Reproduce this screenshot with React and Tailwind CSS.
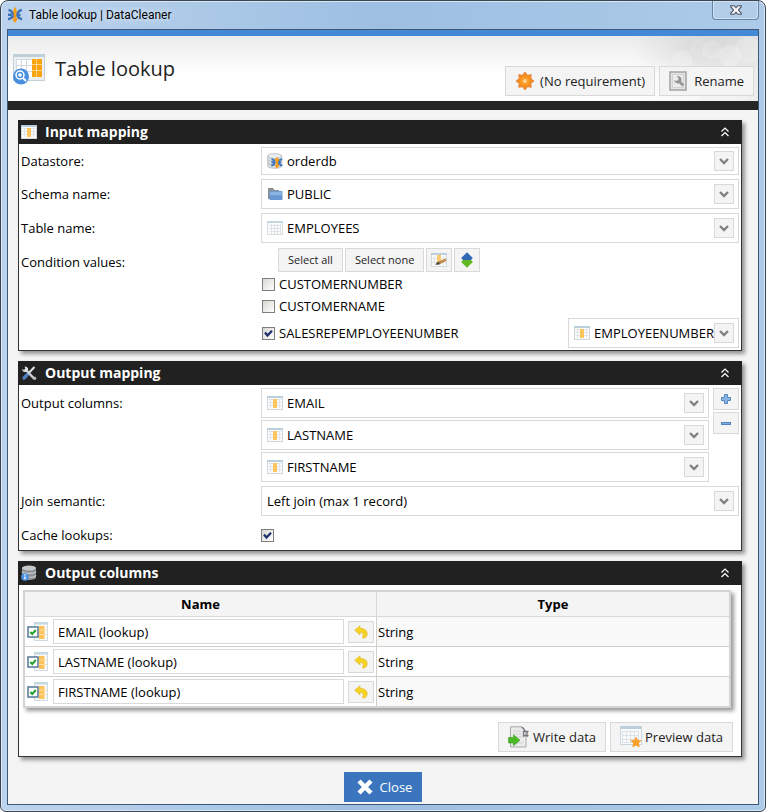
import React from "react";

function ColumnIcon() {
  return (
    <svg width="16" height="14" viewBox="0 0 16 14" className="shrink-0" aria-hidden="true">
      <rect x="0.5" y="0.5" width="15" height="13" fill="#fafbfb" stroke="#d0d8dd" />
      <rect x="0" y="0" width="16" height="2" fill="#b9cfdc" />
      <path d="M3.5 3v9M12.5 3v9M1.5 3.5h13M1.5 6.500h13M1.5 9.5h13" stroke="#e0e4e6" strokeWidth="1" fill="none" />
      <rect x="6" y="3" width="4" height="9" fill="#fdc65c" />
    </svg>
  );
}

function GridIcon() {
  return (
    <svg width="16" height="14" viewBox="0 0 16 14" className="shrink-0" aria-hidden="true">
      <rect x="0.5" y="0.5" width="15" height="13" fill="#fbfcfc" stroke="#d5dde2" />
      <rect x="0" y="0" width="16" height="2" fill="#c6d7e1" />
      <path d="M4.5 3v10M7.5 3v10M10.5 3v10M13.500 3v10M2 4.5h12M2 7.5h12M2 10.5h12" stroke="#dfe3e6" fill="none" />
    </svg>
  );
}

function FolderIcon() {
  return (
    <svg width="16" height="14" viewBox="0 0 16 14" className="shrink-0" aria-hidden="true">
      <path d="M1 12V1.500Q1 1 1.500 1H6l1.500 2H12v9z" fill="#8c8f93" />
      <path d="M2.500 5Q2.500 4 3.300 4H14.700q.8 0 .8.800V12.200q0 .8-.8.800H3.200q-.7 0-.7-.8z" fill="#6697d2" />
      <path d="M3.200 4.800h11.600v3.500H3.200z" fill="#8bb3e1" />
    </svg>
  );
}

function CleanerGlyph({ size }) {
  return (
    <svg width={size} height={size} viewBox="0 0 16 16" className="shrink-0" aria-hidden="true">
      <path d="M1.500 3c2 .2 3.500 1.500 4.500 3.500h1v3H5.500C4.500 11 3 12 1 12.300M1 7.800h4" fill="none" stroke="#3b74b8" strokeWidth="2.400" />
      <path d="M14.800 3c-2 .2-3.300 1.500-4.300 3.200-.6 1.200-.4 2.500.3 3.500.9 1.500 2.200 2.300 4.200 2.600M11 8h2.500" fill="none" stroke="#3b74b8" strokeWidth="2.400" />
      <path d="M8 0l1.300 1.500L8.800 3l1.900 1.300L9.300 5.800v5.700h1.900L8 16l-3.200-4.500h1.900V5.800L5.300 4.300 7.200 3l-.5-1.500z" fill="#f79a1b" />
    </svg>
  );
}

function DatastoreIcon() {
  return (
    <svg width="16" height="16" viewBox="0 0 16 16" className="shrink-0" aria-hidden="true">
      <path d="M.700 3v10c0 3 14 3 14 0V3z" fill="#dcdfe3" stroke="#a9aeb4" strokeWidth=".7" />
      <path d="M.700 6.500c1 1.500 3 2 5 2M.700 10c1 1.500 3 2 5 2" stroke="#b8bcc2" fill="none" />
      <ellipse cx="7.700" cy="3" rx="7" ry="2.300" fill="#eceef1" stroke="#a9aeb4" strokeWidth=".7" />
      <path d="M4.500 6.200c2.200.2 3.200 1.500 3.200 3s-1 3-3.400 3.300M4.500 9.300h3M15.300 6.200c-2.200.2-3.600 1.500-3.600 3s1.400 3 3.600 3.300M12 9.300h2" fill="none" stroke="#3f78bd" strokeWidth="2" />
      <path d="M10 4l1.200 1.500L12.500 7l-1.300 1v4h1.400L10 15.800 7.400 12h1.400V8L7.500 7l1.300-1.500z" fill="#f79a1b" />
    </svg>
  );
}

function LookupIcon() {
  return (
    <svg width="32" height="32" viewBox="0 0 32 32" className="shrink-0" aria-hidden="true">
      <rect x="0.500" y="1.500" width="31" height="26" fill="#eaf0f3" stroke="#c5d0d6" />
      <rect x="0" y="1" width="32" height="3" fill="#c1d0d8" />
      <rect x="3" y="6" width="26" height="18" fill="#fff" />
      <path d="M3.500 6v18M8.500 6v18M13.500 6v18M3 6.500h16M3 12.500h16M3 18.500h16" stroke="#d3d9dc" fill="none" />
      <path d="M19 6h4.500v5.500H19zM24 6h5v5.500h-5zM19 12h4.500v5.500H19zM24 12h5v5.500h-5zM19 18h4.500v6H19zM24 18h5v6h-5z" fill="#fba40f" />
      <circle cx="8" cy="23.500" r="8" fill="#4a8fdc" />
      <circle cx="7" cy="22" r="4" fill="none" stroke="#fff" strokeWidth="1.500" />
      <path d="M7 20v4M5 22h4" stroke="#fff" strokeWidth="1.300" />
      <path d="M10 25l3 3" stroke="#fff" strokeWidth="2" />
    </svg>
  );
}

function SunIcon() {
  return (
    <svg width="20" height="20" viewBox="0 0 20 20" className="shrink-0" aria-hidden="true">
      <path d="M10 1l2.500 3.200L16.300 3.700l-.5 3.800L19 10l-3.200 2.500.5 3.800-3.800-.5L10 19l-2.500-3.200-3.800.5.5-3.800L1 10l3.200-2.500-.5-3.800 3.800.5z" fill="#f58b1b" stroke="#e0823c" strokeWidth=".8" />
      <circle cx="10" cy="10" r="4.800" fill="#fb9c26" />
      <circle cx="10" cy="10" r="2" fill="#fdd59c" />
    </svg>
  );
}

function RenameIcon() {
  return (
    <svg width="18" height="20" viewBox="0 0 18 20" className="shrink-0" aria-hidden="true">
      <rect x="1" y="1" width="16" height="18" fill="#e4e4e4" stroke="#a2a2a2" strokeWidth="1.500" />
      <rect x="3.500" y="3.500" width="11" height="13" fill="#ececec" stroke="#d2d2d2" />
      <path d="M7.500 5q5-.5 5 3.500l-.3 2 3 3-2 2-3-3.200Q6 13 5 9l2.200 1 2-1 .2-2z" fill="#969696" />
    </svg>
  );
}

function ToolsIcon() {
  return (
    <svg width="16" height="16" viewBox="0 0 16 16" className="shrink-0" aria-hidden="true">
      <path d="M13.500 2L7 8.800" stroke="#dfe2e6" strokeWidth="2" />
      <path d="M6.500 9.500L3 13" stroke="#4f7fbf" strokeWidth="3.400" strokeLinecap="round" />
      <path d="M5 5l7.500 8" stroke="#cdd0d4" strokeWidth="2.500" strokeLinecap="round" />
      <path d="M3.500 1.500l.8 2L3 5 1.200 4Q1.300 7.500 5 7L7.200 5Q7.500 1.500 3.500 1.500z" fill="#dfe2e5" />
      <path d="M12 14.500l.3-2.300 1.700-.7 1.500 1.500-1 2z" fill="#b9bdc2" />
    </svg>
  );
}

function DatabaseInfoIcon() {
  return (
    <svg width="16" height="16" viewBox="0 0 16 16" className="shrink-0" aria-hidden="true">
      <path d="M1 3v9.500c0 3.300 14 3.300 14 0V3z" fill="#8f9397" />
      <path d="M1 6.500c1 2.600 13 2.600 14 0M1 10.300c1 2.600 13 2.600 14 0" fill="none" stroke="#c5c8ca" strokeWidth="1.200" />
      <ellipse cx="8" cy="3" rx="7" ry="2.600" fill="#c4c7c9" />
      <circle cx="4" cy="12" r="3.800" fill="#4a92e2" />
      <path d="M4 11.500v2.800M4 9.300v1.200" stroke="#fff" strokeWidth="1.400" />
    </svg>
  );
}

function EditColumnIcon() {
  return (
    <svg width="16" height="14" viewBox="0 0 16 14" className="shrink-0" aria-hidden="true">
      <rect x="0.500" y="0.500" width="15" height="13" fill="#fafbfb" stroke="#d0d9de" />
      <rect x="0" y="0" width="16" height="2" fill="#bcd0dc" />
      <path d="M3.500 3v9M12.500 3v9M1 5.500h14M1 9.500h14" stroke="#e0e4e6" />
      <rect x="6" y="2" width="4" height="7" fill="#fdc970" />
      <path d="M7.500 8.500L14.500 5.500l1.200 2L9.500 11z" fill="#c08a4c" />
      <path d="M4.500 11.800l1-2 2-1.300 2 2.500-2 .8z" fill="#5a4b3a" />
    </svg>
  );
}

function ReorderIcon() {
  return (
    <svg width="12" height="16" viewBox="0 0 12 16" className="shrink-0" aria-hidden="true">
      <path d="M6 .3L11.800 6 10 8H2L.2 6z" fill="#2f68b3" />
      <path d="M6 15.700L.2 10 2 8h8l1.800 2z" fill="#62b722" />
    </svg>
  );
}

function PlusIcon() {
  return (
    <svg width="10" height="10" viewBox="0 0 10 10" aria-hidden="true">
      <path d="M3.500.5h3v3h3v3h-3v3h-3v-3h-3v-3h3z" fill="#8db5e4" stroke="#5486c4" />
    </svg>
  );
}

function MinusIcon() {
  return (
    <svg width="10" height="3" viewBox="0 0 10 3" aria-hidden="true">
      <rect x="0.500" y="0.500" width="9" height="2" fill="#7eaae0" stroke="#5486c4" />
    </svg>
  );
}

function CheckedColumnIcon() {
  return (
    <svg width="21" height="19" viewBox="0 0 21 19" className="shrink-0" aria-hidden="true">
      <rect x="7.500" y="0.500" width="13" height="18" fill="#f7f9fa" stroke="#cfdae1" />
      <rect x="7" y="0" width="14" height="2.500" fill="#c6d8e2" />
      <path d="M12 4h5.500v13H12z" fill="#fdc25a" />
      <path d="M12 8h8M12 12.500h8" stroke="#fbdca4" />
      <rect x="1" y="5" width="10" height="10" fill="#fff" stroke="#5e7f9c" strokeWidth="1.600" />
      <path d="M3.300 10l2 2L8.800 8" fill="none" stroke="#24a12f" strokeWidth="2" />
    </svg>
  );
}

function UndoIcon() {
  return (
    <svg width="14" height="14" viewBox="0 0 14 14" aria-hidden="true">
      <path d="M.700 5.200L6 .8v2.500C10.500 3.300 13.300 5.500 13.200 9c0 2-1.500 3.700-3.700 4.200-1-.2-1.300-1-.8-1.700C10 9.500 9 7.500 6 7.500V10z" fill="#f6d323" stroke="#e0bb3a" strokeWidth=".7" />
    </svg>
  );
}

function WriteIcon() {
  return (
    <svg width="21" height="22" viewBox="0 0 21 22" className="shrink-0" aria-hidden="true">
      <path d="M2.500.8H14l4 4.500V21H2.500z" fill="#ebebeb" stroke="#a7aaac" />
      <path d="M5 5h8M5 8h8M5 11h9M5 17h10" stroke="#cdcfd0" />
      <path d="M13.500 1.500q3 .5 3 4M15 5.500h5.500M15 9.500h5.500M15.500 5v6M19 5v6" stroke="#77797c" strokeWidth="1.300" fill="none" />
      <path d="M.5 11.500h5V8.700l6.500 5.500-6.500 5.500V17h-5z" fill="#4db826" stroke="#3b9a1f" strokeWidth=".6" />
    </svg>
  );
}

function PreviewIcon() {
  return (
    <svg width="22" height="22" viewBox="0 0 22 22" className="shrink-0" aria-hidden="true">
      <rect x="0.500" y="0.500" width="21" height="18" fill="#fafbfc" stroke="#cbd6dd" />
      <rect x="0" y="0" width="22" height="3" fill="#bccfdb" />
      <path d="M2.500 5v12M6.500 5v12M10.500 5v12M14.500 5v12M18.500 5v12M2 5.500h17M2 9.500h17M2 13.500h17M2 16.500h17" stroke="#dce1e4" fill="none" />
      <path d="M16 11l1.600 3.200 3.700.4-2.700 2.500.7 3.900-3.300-1.800-3.300 1.800.7-3.900-2.700-2.500 3.700-.4z" fill="#f9a12b" stroke="#ec952a" strokeWidth=".5" />
    </svg>
  );
}

function Bokeh() {
  return (
    <svg viewBox="0 0 130 65" preserveAspectRatio="xMaxYMid slice" className="absolute right-0 top-0 h-full w-[130px]" aria-hidden="true">
      <defs>
        <radialGradient id="haze" cx="0.620" cy="0.150" r="0.600">
          <stop offset="0" stopColor="#c8c8c8" stopOpacity="0.600" />
          <stop offset="1" stopColor="#d8d8d8" stopOpacity="0" />
        </radialGradient>
        <linearGradient id="edge" x1="0" x2="1">
          <stop offset="0" stopColor="#dcdcdc" stopOpacity="0" />
          <stop offset="1" stopColor="#dadada" stopOpacity="0.500" />
        </linearGradient>
      </defs>
      <rect width="130" height="65" fill="url(#edge)" />
      <rect width="130" height="65" fill="url(#haze)" />
      <g fill="#fff">
        <circle cx="72" cy="12" r="10" opacity=".12" />
        <circle cx="54" cy="24" r="10" opacity=".2" />
        <circle cx="84" cy="14" r="10" opacity=".2" />
        <circle cx="102" cy="20" r="11" opacity=".25" />
        <circle cx="120" cy="14" r="13" opacity=".2" />
        <circle cx="60" cy="58" r="12" opacity=".3" />
        <circle cx="106" cy="58" r="14" opacity=".2" />
      </g>
    </svg>
  );
}

function Combo({ label, id, value, icon, short }) {
  return (
    <div className={`flex w-full items-center border border-[#d9d9d9] bg-white pl-[5px] pr-1 ${short ? "h-7" : "h-[30px]"}`}>
      {icon && <span className="mr-1 flex shrink-0">{icon}</span>}
      <select id={id} aria-label={label} className="h-full min-w-0 flex-1 appearance-none bg-transparent text-[13px] text-black outline-none">
        <option>{value}</option>
      </select>
      <span className="pointer-events-none flex h-5 w-5 shrink-0 items-center justify-center border border-[#d9d9d9] bg-[#f4f4f4]">
        <svg width="10" height="7" viewBox="0 0 10 7" aria-hidden="true">
          <path d="M1 1l4 4 4-4" fill="none" stroke="#808080" strokeWidth="2.300" />
        </svg>
      </span>
    </div>
  );
}

function Check({ id, label, checked }) {
  return (
    <span className="flex items-center gap-1">
      <span className="grid h-[13px] w-[13px] place-items-center">
        <input
          id={id}
          type="checkbox"
          defaultChecked={checked}
          className="peer col-start-1 row-start-1 h-[13px] w-[13px] appearance-none border border-[#7f7f7f] bg-linear-to-br from-[#d8d8d2] to-white"
        />
        <svg width="9" height="9" viewBox="0 0 9 9" className="pointer-events-none invisible col-start-1 row-start-1 peer-checked:visible" aria-hidden="true">
          <path d="M1 3.500l2.500 3L8 1.800" fill="none" stroke="#1e3070" strokeWidth="2.300" />
        </svg>
      </span>
      {label && <label htmlFor={id}>{label}</label>}
    </span>
  );
}

function Panel({ icon, title, children }) {
  return (
    <section className="shadow-[3px_3px_4px_rgba(0,0,0,0.4)]">
      <header className="flex h-6 items-center bg-[#212121] pl-[3px] pr-3 text-white">
        <span className="flex w-6 shrink-0">{icon}</span>
        <h2 className="flex-1 text-[14px] font-bold">{title}</h2>
        <button type="button" aria-label={`Collapse ${title}`} className="flex">
          <svg width="10" height="10" viewBox="0 0 10 10" aria-hidden="true">
            <path d="M1.500 4.500L5 1l3.500 3.500M1.500 9L5 5.500 8.500 9" fill="none" stroke="#fff" strokeWidth="1.200" />
          </svg>
        </button>
      </header>
      <div className="border border-t-0 border-[#333] bg-white">{children}</div>
    </section>
  );
}

function Row({ label, htmlFor, children }) {
  return (
    <div className="flex items-start">
      <label htmlFor={htmlFor} className="w-60 shrink-0 leading-[30px]">{label}</label>
      <div className="min-w-0 flex-1">{children}</div>
    </div>
  );
}

const smallButton = "flex h-6 items-center justify-center border border-[#d9d9d9] bg-[#f4f4f4]";
const bigButton = "flex h-[30px] items-center border border-[#d9d9d9] bg-[#f4f4f4] px-[9px] text-[#222]";

function OutputTable() {
  const rows = ["EMAIL (lookup)", "LASTNAME (lookup)", "FIRSTNAME (lookup)"];
  return (
    <table className="w-full table-fixed border-separate border-spacing-0 border-2 border-[#d3d3d3] shadow-[3px_3px_4px_rgba(0,0,0,0.4)]">
      <thead>
        <tr className="bg-[#f4f4f4]">
          <th className="h-[25px] border-b border-r border-[#d9d9d9] p-0 font-bold">Name</th>
          <th className="h-[25px] border-b border-[#d9d9d9] p-0 font-bold">Type</th>
        </tr>
      </thead>
      <tbody>
        {rows.map((name) => (
          <tr key={name} className="group odd:bg-[#f9f9f9] even:bg-white">
            <td className="h-[30px] border-b border-r border-[#d0cfc8] bg-white p-0 group-last:h-[29px] group-last:border-b-0">
              <div className="flex items-center px-0.5">
                <CheckedColumnIcon />
                <input type="text" aria-label={`Name of ${name}`} defaultValue={name} className="ml-[5px] h-[25px] min-w-0 flex-1 border border-[#d9d9d9] bg-white px-1 text-[13px]" />
                <button type="button" aria-label={`Reset ${name}`} className="ml-1 flex h-[22px] w-[26px] items-center justify-center border border-[#d9d9d9] bg-[#f4f4f4]">
                  <UndoIcon />
                </button>
              </div>
            </td>
            <td className="border-b border-[#d0cfc8] p-0 pl-px group-last:border-b-0">String</td>
          </tr>
        ))}
      </tbody>
    </table>
  );
}

export default function App() {
  return (
    <div className="flex min-h-screen flex-col rounded-t-lg rounded-b-md border border-[#3c4450] bg-linear-to-r from-[#bcd3ee] via-[#9dbfe2] to-[#adcbe9] px-1.5 pb-1.5 font-['Open_Sans','Noto_Sans',sans-serif] text-[13px] leading-5 text-black shadow-[inset_0_0_0_1px_#d9e8f7]">
      <div className="flex h-7 items-start justify-between">
        <div className="flex h-full items-center gap-1.5">
          <CleanerGlyph size={16} />
          <h1 className="font-[Roboto,sans-serif] text-[12px] [text-shadow:0_0_6px_white]">Table lookup | DataCleaner</h1>
        </div>
        <button type="button" aria-label="Close window" className="flex h-[19px] w-[47px] items-center justify-center rounded-b border border-t-0 border-[#6783a3] bg-[#b3cde9] shadow-[inset_0_0_0_1px_#cfe1f3]">
          <svg width="12" height="10" viewBox="0 0 12 10" aria-hidden="true">
            <path d="M.7.7h3.500L6 2.700 7.800.7h3.500v1L8.500 5l2.800 3.300v1H7.800L6 7.300l-1.800 2H.7v-1L3.500 5 .7 1.700z" fill="#f5f5f5" stroke="#4b5568" strokeWidth="1.100" />
          </svg>
        </button>
      </div>

      <div className="flex flex-1 flex-col border border-[#3f5876] bg-[#f4f4f4]">
        <div className="h-1.5 bg-[#4489d6]" />
        <header className="relative flex h-[65px] justify-between bg-linear-to-b from-[#ebebeb] to-white to-60% pl-[5px] pr-1">
          <Bokeh />
          <div className="relative flex items-center gap-[10px]">
            <LookupIcon />
            <h2 className="text-[20px] leading-7 text-[#222]">Table lookup</h2>
          </div>
          <div className="relative flex items-end gap-1 pb-[5px]">
            <button type="button" className={`${bigButton} gap-[5px]`}><SunIcon />(No requirement)</button>
            <button type="button" className={`${bigButton} gap-[7px]`}><RenameIcon />Rename</button>
          </div>
        </header>
        <div className="h-[9px] bg-[#262626]" />

        <main className="flex flex-col gap-[10px] pb-[15px] pl-[10px] pr-4 pt-[10px]">
          <Panel icon={<ColumnIcon />} title="Input mapping">
            <div className="flex flex-col gap-1 pb-0.5 pl-0.5 pr-0.5 pt-[3px]">
              <div className="flex h-7 items-center">
                <label htmlFor="datastore" className="w-60 shrink-0">Datastore:</label>
                <Combo id="datastore" short value="orderdb" icon={<DatastoreIcon />} />
              </div>
              <Row label="Schema name:" htmlFor="schema">
                <Combo id="schema" value="PUBLIC" icon={<FolderIcon />} />
              </Row>
              <Row label="Table name:" htmlFor="table">
                <Combo id="table" value="EMPLOYEES" icon={<GridIcon />} />
              </Row>
              <div className="flex items-start">
                <span className="w-60 shrink-0 leading-[30px]">Condition values:</span>
                <div className="min-w-0 flex-1">
                  <div className="flex h-[26px] items-center gap-0.5 pl-[17px] text-[11px] text-[#222]">
                    <button type="button" className={`${smallButton} px-[9px]`}>Select all</button>
                    <button type="button" className={`${smallButton} px-[9px]`}>Select none</button>
                    <button type="button" aria-label="Edit columns" className={`${smallButton} w-[26px]`}><EditColumnIcon /></button>
                    <button type="button" aria-label="Reorder columns" className={`${smallButton} w-[26px]`}><ReorderIcon /></button>
                  </div>
                  <div className="flex h-[22px] items-center pl-px"><Check id="customernumber" label="CUSTOMERNUMBER" /></div>
                  <div className="flex h-[22px] items-center pl-px"><Check id="customername" label="CUSTOMERNAME" /></div>
                  <div className="flex items-center justify-between pl-px pt-px">
                    <Check id="salesrep" label="SALESREPEMPLOYEENUMBER" checked />
                    <div className="w-[171px]">
                      <Combo label="Condition column" value="EMPLOYEENUMBER" icon={<ColumnIcon />} />
                    </div>
                  </div>
                </div>
              </div>
            </div>
          </Panel>

          <Panel icon={<ToolsIcon />} title="Output mapping">
            <div className="flex flex-col gap-1 pl-0.5 pr-0.5 pt-[3px]">
              <Row label="Output columns:" htmlFor="output-1">
                <div className="flex gap-1">
                  <div className="flex min-w-0 flex-1 flex-col gap-0.5">
                    <Combo id="output-1" value="EMAIL" icon={<ColumnIcon />} />
                    <Combo label="Output column 2" value="LASTNAME" icon={<ColumnIcon />} />
                    <Combo label="Output column 3" value="FIRSTNAME" icon={<ColumnIcon />} />
                  </div>
                  <div className="flex flex-col gap-0.5">
                    <button type="button" aria-label="Add column" className="flex h-[22px] w-[26px] items-center justify-center border border-[#d9d9d9] bg-[#f4f4f4]"><PlusIcon /></button>
                    <button type="button" aria-label="Remove column" className="flex h-[22px] w-[26px] items-center justify-center border border-[#d9d9d9] bg-[#f4f4f4]"><MinusIcon /></button>
                  </div>
                </div>
              </Row>
              <Row label="Join semantic:" htmlFor="join">
                <Combo id="join" value="Left join (max 1 record)" />
              </Row>
              <Row label="Cache lookups:" htmlFor="cache">
                <div className="flex h-[30px] items-center"><Check id="cache" checked /></div>
              </Row>
            </div>
          </Panel>

          <Panel icon={<DatabaseInfoIcon />} title="Output columns">
            <div className="pb-1 pl-1 pr-[10px] pt-[5px]">
              <OutputTable />
            </div>
            <div className="flex justify-end gap-1 pb-1 pr-2 pt-[10px]">
              <button type="button" className={`${bigButton} gap-1`}><WriteIcon />Write data</button>
              <button type="button" className={`${bigButton} gap-[3px]`}><PreviewIcon />Preview data</button>
            </div>
          </Panel>
        </main>

        <footer className="flex justify-center pb-0.5">
          <button type="button" className="flex h-[30px] items-center gap-1.5 bg-[#3a75bd] pl-3 pr-[10px] text-white">
            <svg width="18" height="16" viewBox="0 0 18 16" aria-hidden="true">
              <path d="M3 2l12 12M15 2L3 14" stroke="#fff" strokeWidth="4.500" />
            </svg>
            Close
          </button>
        </footer>
      </div>
    </div>
  );
}
